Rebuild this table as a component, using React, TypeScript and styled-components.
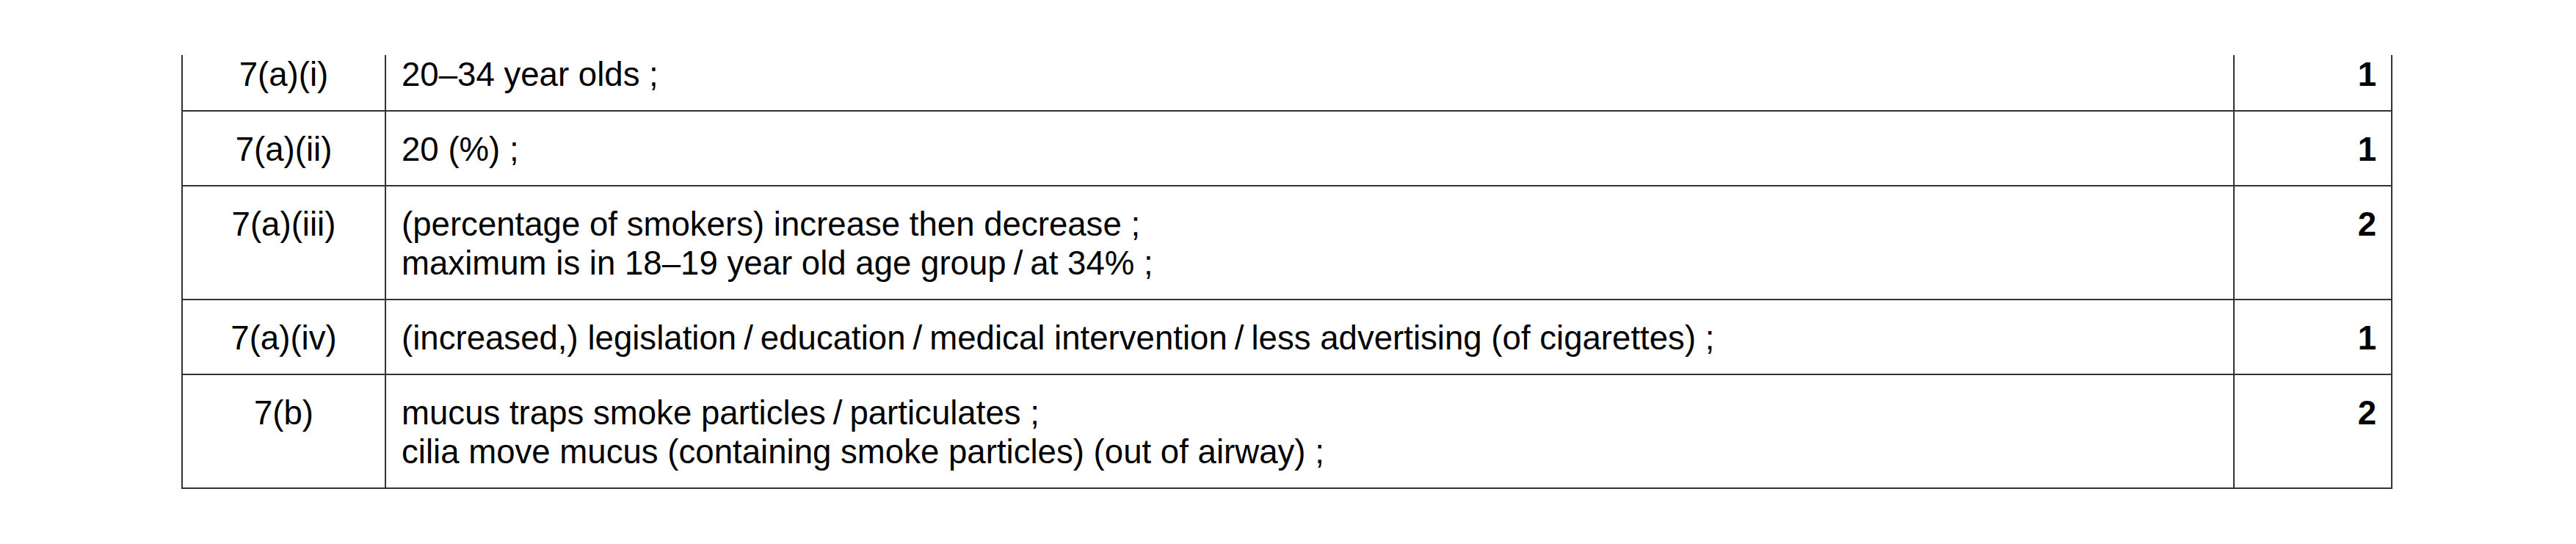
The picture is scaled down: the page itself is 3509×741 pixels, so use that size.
import React from "react";
import styled, { createGlobalStyle } from "styled-components";

const Global = createGlobalStyle`
  html, body {
    margin: 0;
    padding: 0;
    background: #ffffff;
  }
  body {
    font-family: "Liberation Sans", Arial, sans-serif;
    color: #000000;
  }
`;

const Page = styled.div`
  padding: 75px 0 0 247px;
  width: 3509px;
  height: 741px;
  box-sizing: border-box;
  background: #ffffff;
`;

const Table = styled.div`
  width: 3012px;
  box-sizing: border-box;
  border-left: 2px solid #333333;
  border-right: 2px solid #333333;
`;

const Row = styled.div<{ $first?: boolean }>`
  display: grid;
  grid-template-columns: 275px 2518px 215px;
  border-bottom: 2px solid #333333;
  & > div {
    padding-top: ${(p) => (p.$first ? "0px" : "25px")};
    padding-bottom: 22px;
  }
`;

const Cell = styled.div`
  font-size: 45.6px;
  line-height: 53px;
  box-sizing: border-box;
  white-space: nowrap;
`;

const QCell = styled(Cell)`
  text-align: center;
`;

const AnswerCell = styled(Cell)`
  border-left: 2px solid #333333;
  padding-left: 21px;
  padding-right: 20px;
`;

const MarkCell = styled(Cell)`
  border-left: 2px solid #333333;
  text-align: right;
  font-weight: bold;
  padding-right: 20px;
`;

const Line = styled.div``;

const Sep = styled.span`
  padding: 0 10px;
`;

type RowData = { q: string; lines: string[]; mark: number };

const rows: RowData[] = [
  { q: "7(a)(i)", lines: ["20–34 year olds ;"], mark: 1 },
  { q: "7(a)(ii)", lines: ["20 (%) ;"], mark: 1 },
  {
    q: "7(a)(iii)",
    lines: [
      "(percentage of smokers) increase then decrease ;",
      "maximum is in 18–19 year old age group / at 34% ;",
    ],
    mark: 2,
  },
  {
    q: "7(a)(iv)",
    lines: [
      "(increased,) legislation / education / medical intervention / less advertising (of cigarettes) ;",
    ],
    mark: 1,
  },
  {
    q: "7(b)",
    lines: [
      "mucus traps smoke particles / particulates ;",
      "cilia move mucus (containing smoke particles) (out of airway) ;",
    ],
    mark: 2,
  },
];

function renderLine(text: string) {
  const parts = text.split(" / ");
  return parts.map((p, i) => (
    <React.Fragment key={i}>
      {i > 0 && <Sep>/</Sep>}
      {p}
    </React.Fragment>
  ));
}

export default function App() {
  return (
    <>
      <Global />
      <Page>
        <Table>
          {rows.map((r, i) => (
            <Row key={r.q} $first={i === 0}>
              <QCell>{r.q}</QCell>
              <AnswerCell>
                {r.lines.map((l, j) => (
                  <Line key={j}>{renderLine(l)}</Line>
                ))}
              </AnswerCell>
              <MarkCell>{r.mark}</MarkCell>
            </Row>
          ))}
        </Table>
      </Page>
    </>
  );
}
